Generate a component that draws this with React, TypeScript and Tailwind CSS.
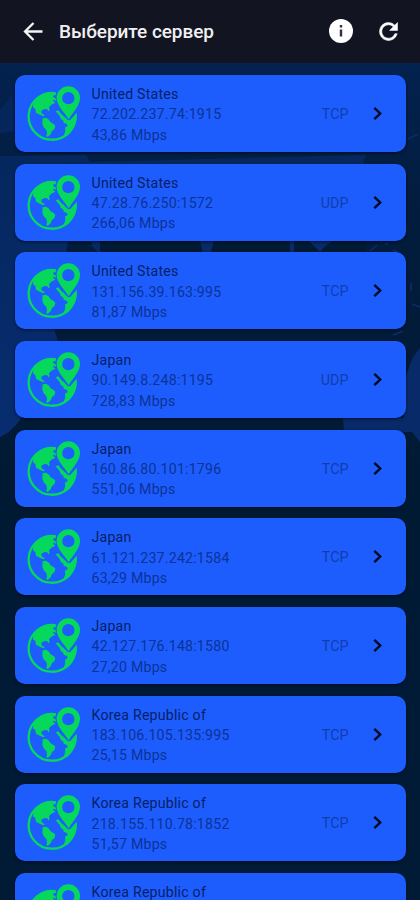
type Server = { country: string; address?: string; speed?: string; protocol?: string };

const servers: Server[] = [
  { country: "United States", address: "72.202.237.74:1915", speed: "43,86 Mbps", protocol: "TCP" },
  { country: "United States", address: "47.28.76.250:1572", speed: "266,06 Mbps", protocol: "UDP" },
  { country: "United States", address: "131.156.39.163:995", speed: "81,87 Mbps", protocol: "TCP" },
  { country: "Japan", address: "90.149.8.248:1195", speed: "728,83 Mbps", protocol: "UDP" },
  { country: "Japan", address: "160.86.80.101:1796", speed: "551,06 Mbps", protocol: "TCP" },
  { country: "Japan", address: "61.121.237.242:1584", speed: "63,29 Mbps", protocol: "TCP" },
  { country: "Japan", address: "42.127.176.148:1580", speed: "27,20 Mbps", protocol: "TCP" },
  { country: "Korea Republic of", address: "183.106.105.135:995", speed: "25,15 Mbps", protocol: "TCP" },
  { country: "Korea Republic of", address: "218.155.110.78:1852", speed: "51,57 Mbps", protocol: "TCP" },
  { country: "Korea Republic of" },
];

function GlobePin() {
  return (
    <svg className="h-[57px] w-[55px] shrink-0" viewBox="48 57 165 171" fill="#06d85c">
      <path
        d="M134 82 A70 70 0 1 0 193 150"
        fill="none"
        stroke="#06d85c"
        strokeWidth="7"
      />
      <path d="M134 79 C108 78 82 89 67 111 L66 124 L73 129 L75 140 L86 146 L98 151 L101 148 L92 142 L91 134 L101 129 L109 130 L112 136 L116 132 L114 124 L121 116 L133 110 L126 104 L128 101 L136 105 L133 96 L126 93 L128 88 L134 88 Z" />
      <path d="M95 157 L105 155 L114 161 L118 168 L129 175 L133 180 L130 190 L123 195 L119 205 L110 213 L106 210 L108 202 L106 192 L98 184 L94 173 Z" />
      <path d="M134 136 L142 133 L150 143 L158 150 L171 163 L178 162 L191 147 L197 140 C201 168 188 195 166 211 L159 207 L163 196 L162 185 L170 180 L168 174 L158 170 L157 164 L149 158 L146 150 Z" />
      <path
        fillRule="evenodd"
        d="M172 61 A35 35 0 0 0 137 96 C137 119 159 137 173 160 C186 138 207 119 207 96 A35 35 0 0 0 172 61 Z M172 78 A18.5 18.5 0 1 1 172 115 A18.5 18.5 0 1 1 172 78 Z"
      />
    </svg>
  );
}

function MapBackdrop() {
  return (
    <svg className="absolute inset-0 h-full w-full" viewBox="0 0 420 900" aria-hidden="true">
      <defs>
        <linearGradient id="sea" x1="0" y1="0" x2="0" y2="1">
          <stop offset="0" stopColor="#03224f" />
          <stop offset="0.18" stopColor="#021c3d" />
          <stop offset="0.5" stopColor="#011a34" />
          <stop offset="1" stopColor="#011a36" />
        </linearGradient>
        <linearGradient id="land" x1="0" y1="0" x2="0" y2="1">
          <stop offset="0" stopColor="#04265a" />
          <stop offset="1" stopColor="#082d70" />
        </linearGradient>
      </defs>
      <rect y="63" width="420" height="837" fill="url(#sea)" />
      <path
        d="M0 110 L12 95 L14 131 L0 133 Z M0 156 L86 155 L90 162 L366 155 L362 166 L300 230 L100 254 L92 246 L68 242 L53 325 L58 342 L20 420 Q10 433 0 437 Z"
        fill="url(#land)"
      />
      <path d="M200 241 h14 l-3 12 h-8 Z M290 241 h4 v12 h-4 Z M308 241 h25 l-8 5 -5 6 -6-6 Z" fill="#082a65" />
      <path d="M100 240 H199 L202 252 H100 Z M214 240 H289 V252 H211 Z M295 240 H308 L319 252 H295 Z M333 240 H366 V252 H321 Z" fill="#011a34" />
      <path d="M68 242 H92 V245 L76 246 Z" fill="#011a34" />
      <path d="M343 418 L404 418 L405 378 L413 357 L420 348 V442 L412 432 H344 Z" fill="#082a68" />
      <path
        d="M408 139 l10 -5 M370 251 l7 -6 M385 244 h3 M393 250 l5 2 M411 283 v8 M412 304 l8 3 M393 335 l10 -4"
        stroke="#0a2e6a"
        strokeWidth="1.6"
        fill="none"
      />
    </svg>
  );
}

function ServerCard({ server }: { server: Server }) {
  return (
    <li className="flex h-[77px] shrink-0 items-start rounded-[10px] bg-[#1d5dfe] pt-[10px] pl-[12px] shadow-[0_1px_3px_rgba(0,5,25,0.7)]">
      <GlobePin />
      <div className="-mt-px ml-[10px] flex-1 text-[14.2px] leading-[20.3px] tracking-[0.2px] text-[#0c3396]">
        <div className="text-[#081f66]">{server.country}</div>
        {server.address && <div>{server.address}</div>}
        {server.speed && <div>{server.speed}</div>}
      </div>
      {server.protocol && (
        <>
          <span className="mt-[19px] text-[14.3px] leading-5 text-[#113eae]">{server.protocol}</span>
          <svg className="mt-5 mr-[22px] ml-[23px] h-4 w-3" viewBox="0 0 12 16" fill="none" stroke="#020a20" strokeWidth="2.4">
            <path d="M2.3 2.8 L8.2 8.5 L2.3 14.2" />
          </svg>
        </>
      )}
    </li>
  );
}

export default function App() {
  return (
    <div className="relative h-[900px] w-[420px] overflow-hidden bg-[#011a34] font-['Roboto',sans-serif]">
      <MapBackdrop />
      <div className="relative flex h-full flex-col">
        <header className="flex h-[63px] shrink-0 items-center bg-[#121422] text-white">
          <svg className="ml-[23px] h-5 w-5" viewBox="0 0 20 20" fill="none" stroke="#f4f4f6" strokeWidth="2.3">
            <path d="M19.5 9.5 H2 M10.5 1 L2 9.5 L10.5 18" />
          </svg>
          <h1 className="ml-4 flex-1 text-[19px] leading-6 font-medium tracking-[-0.05px] text-[#f0f0f2]">Выберите сервер</h1>
          <svg className="mb-px h-6 w-6" viewBox="0 0 24 24">
            <circle cx="12" cy="12" r="12" fill="#fff" />
            <path d="M10.8 6 h2.4 v2.4 h-2.4 Z M10.8 10.5 h2.4 v7 h-2.4 Z" fill="#30313c" />
          </svg>
          <svg className="mr-[18.5px] ml-[21.5px] h-[27px] w-[27px]" viewBox="0 0 24 24" fill="#fff">
            <path d="M17.65 6.35A7.96 7.96 0 0 0 12 4a8 8 0 1 0 7.73 10h-2.08A6 6 0 1 1 12 6c1.66 0 3.14.69 4.22 1.78L13 11h7V4z" stroke="#fff" strokeWidth="0.5" />
          </svg>
        </header>
        <ul className="flex flex-col gap-[11.67px] px-[14.5px] pt-3">
          {servers.map((server, index) => (
            <ServerCard key={index} server={server} />
          ))}
        </ul>
      </div>
    </div>
  );
}
